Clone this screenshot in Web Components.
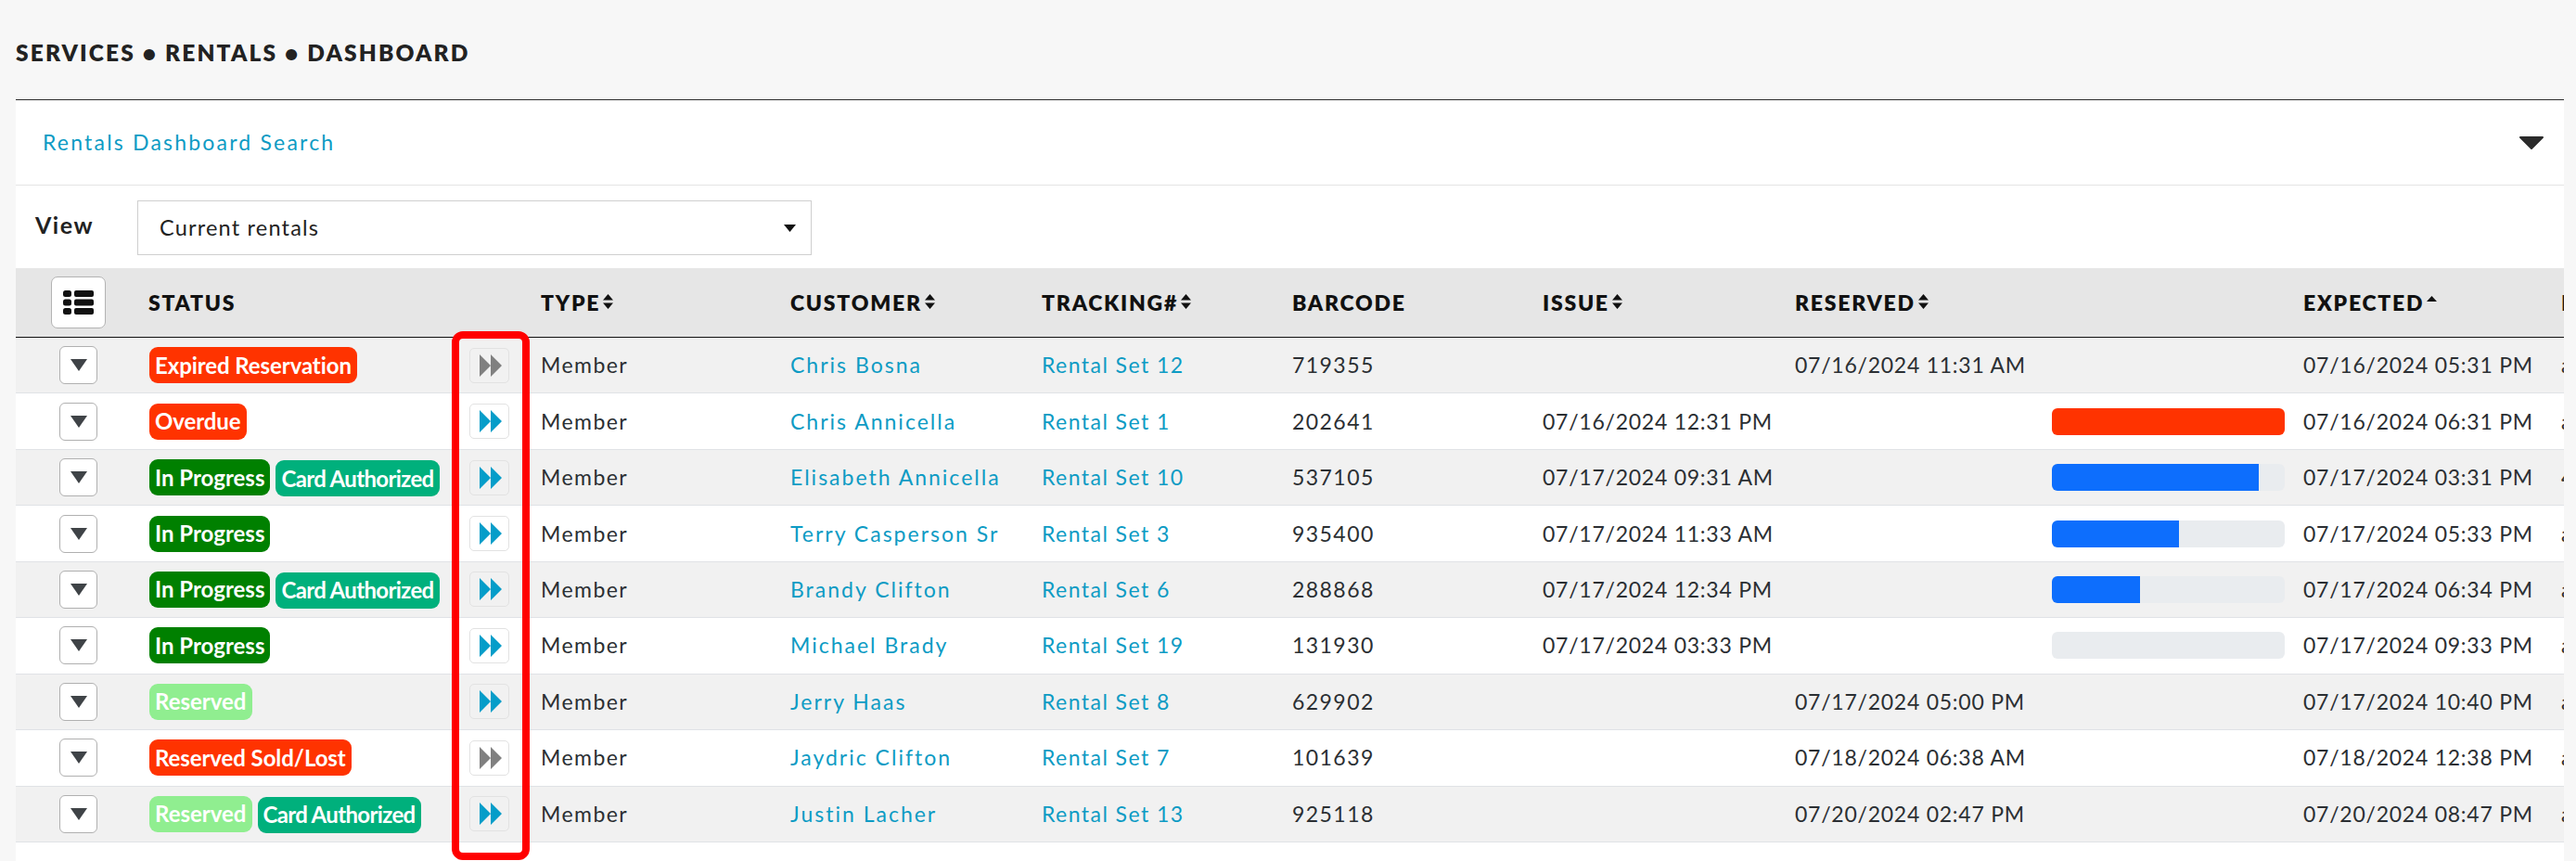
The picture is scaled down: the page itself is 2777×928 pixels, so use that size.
<!DOCTYPE html>
<html lang="en"><head><meta charset="utf-8"><title>Rentals Dashboard</title>
<style>
html,body{margin:0;padding:0;background:#f7f7f7;height:100%;overflow:hidden}
body{font-family:Lato,"Open Sans",sans-serif;color:#2b2f33}
</style></head><body>
<rentals-page></rentals-page>
<script>
const COLS='143px 346px 77px 269px 271px 270px 270px 272px 277px 271px 278px 1fr';
const ICON_DBL=c=>`<svg width="24" height="24" viewBox="0 0 24 24" aria-hidden="true"><path fill="${c}" d="M0 0L12 12L0 24ZM12 0L24 12L12 24Z"/></svg>`;
class SortIcon extends HTMLElement{
  connectedCallback(){
    const up=this.getAttribute('dir')==='up';
    this.attachShadow({mode:'open'}).innerHTML=`<style>:host{display:inline-block;margin-left:3px;vertical-align:${up?'10px':'2px'};line-height:0}</style>
    <svg width="11" height="${up?6:16}" viewBox="0 0 11 ${up?6:16}" aria-hidden="true"><path fill="#111" d="${up?'M5.5 0L11 6H0Z':'M5.5 0L11 6.5H0ZM0 9.5H11L5.5 16Z'}"/></svg>`;
  }
}
customElements.define('sort-icon',SortIcon);

class StatusBadge extends HTMLElement{
  constructor(){super();
    this.attachShadow({mode:'open'}).innerHTML=`<style>
    :host{display:inline-flex;align-items:center;height:39px;box-sizing:border-box;padding:0 6px;border-radius:9px;
      font:700 24px/1 Lato,sans-serif;color:#fff;white-space:nowrap;background:var(--bg)}
    :host([kind=danger]){--bg:#ff3300;letter-spacing:-.08px}
    :host([kind=progress]){--bg:#008000}
    :host([kind=reserved]){--bg:#90ee90}
    :host([kind=card]){--bg:#00b07c;margin-left:6px;position:relative;top:1px;letter-spacing:-.65px}
    </style><slot></slot>`;
  }
}
customElements.define('status-badge',StatusBadge);

class ProgressBar extends HTMLElement{
  connectedCallback(){
    const v=this.getAttribute('value')||0,c=this.getAttribute('color')||'#0d6efd';
    this.attachShadow({mode:'open'}).innerHTML=`<style>
    :host{display:block;width:251px;height:29px;border-radius:6px;background:#e9ecef;overflow:hidden}
    div{height:100%;background:${c}}
    </style><div style="width:${v}%"></div>`;
  }
}
customElements.define('progress-bar',ProgressBar);

class RentalRow extends HTMLElement{
  connectedCallback(){
    const d=JSON.parse(this.getAttribute('data-row'));
    const badges=d.b.map(([k,t])=>`<status-badge kind="${k}">${t}</status-badge>`).join('');
    this.attachShadow({mode:'open'}).innerHTML=`<style>
    :host{display:grid;grid-template-columns:${COLS};align-items:center;height:60.44px;box-sizing:border-box;
      border-bottom:1.5px solid #e0e2e6;font:400 23px/1 Lato,sans-serif;letter-spacing:1.45px;color:#2b2f33;background:#fff;white-space:nowrap}
    :host(:nth-child(odd)){background:#f1f1f1}
    .chev{justify-self:start;margin-left:47px;width:41px;height:41px;box-sizing:border-box;border:1px solid #b0b0b0;border-radius:6px;background:#fff;
      display:flex;align-items:center;justify-content:center}
    .badges{display:flex;letter-spacing:0;align-items:center;padding-left:1px}
    .go{width:43px;height:38px;box-sizing:border-box;border:1px solid #e2e2e2;border-radius:5px;display:flex;align-items:center;justify-content:center;padding-left:3px;background:transparent}
    a{color:#0d9bc4;text-decoration:none}
    .name{letter-spacing:2px}
    .date{letter-spacing:.75px}
    .bar{justify-self:start}
    </style>
    <div class="chev"><svg width="18" height="13" viewBox="0 0 18 13" aria-hidden="true"><path fill="#3f4347" d="M0 0H18L9 13Z"/></svg></div>
    <div class="badges">${badges}</div>
    <div class="go">${ICON_DBL(d.g?'#808080':'#059dc9')}</div>
    <div>Member</div><div class="name"><a>${d.c}</a></div><div><a>${d.t}</a></div><div>${d.n}</div>
    <div class="date">${d.i||''}</div><div class="date">${d.r||''}</div>
    <div class="bar">${d.p!=null?`<progress-bar value="${d.p}" ${d.p==100?'color="#ff3300"':''}></progress-bar>`:''}</div>
    <div class="date">${d.e}</div><div>${d.x}</div>`;
  }
}
customElements.define('rental-row',RentalRow);

class HeaderRow extends HTMLElement{
  constructor(){super();
    this.attachShadow({mode:'open'}).innerHTML=`<style>
    :host{display:grid;grid-template-columns:${COLS};align-items:center;height:75px;box-sizing:border-box;background:#e6e6e6;border-bottom:1.5px solid #111;
      font:800 23px/1 Lato,sans-serif;letter-spacing:1.75px;color:#111;white-space:nowrap}
    .menu{justify-self:start;margin-left:38px;width:59px;height:56px;box-sizing:border-box;background:#fff;border:1px solid #b3b3b3;border-radius:7px;display:flex;align-items:center;justify-content:center}
    .s{grid-column:span 2}
    </style>
    <div class="menu"><svg width="33" height="26" viewBox="0 0 33 26" aria-hidden="true"><g fill="#111"><rect width="9" height="7" rx="2.5"/><rect y="9.5" width="9" height="7" rx="2.5"/><rect y="19" width="9" height="7" rx="2.5"/><rect x="12" width="21" height="7" rx="2"/><rect x="12" y="9.5" width="21" height="7" rx="2"/><rect x="12" y="19" width="21" height="7" rx="2"/></g></svg></div>
    <div class="s">STATUS</div>
    <div>TYPE<sort-icon></sort-icon></div><div>CUSTOMER<sort-icon></sort-icon></div><div>TRACKING#<sort-icon></sort-icon></div>
    <div>BARCODE</div><div>ISSUE<sort-icon></sort-icon></div><div>RESERVED<sort-icon></sort-icon></div><div></div>
    <div>EXPECTED<sort-icon dir="up"></sort-icon></div><div>RETURNED</div>`;
  }
}
customElements.define('header-row',HeaderRow);

class ViewSelect extends HTMLElement{
  constructor(){super();
    this.attachShadow({mode:'open'}).innerHTML=`<style>
    :host{display:flex;align-items:center;justify-content:space-between;width:727px;height:59px;box-sizing:border-box;border:1.5px solid #cfcfcf;background:#fff;
      padding:0 16px 0 23px;font:400 23.5px/1 Lato,sans-serif;letter-spacing:1.2px;color:#222}
    </style><span><slot></slot></span><svg width="13" height="8" viewBox="0 0 13 8" aria-hidden="true"><path fill="#111" d="M0 0H13L6.5 8Z"/></svg>`;
  }
}
customElements.define('view-select',ViewSelect);

const R=(b,g,c,t,n,i,r,p,e,x)=>({b,g,c,t,n,i,r,p,e,x});
const D=[['danger','Expired Reservation']],O=[['danger','Overdue']],P=[['progress','In Progress']],C=['card','Card Authorized'],V=[['reserved','Reserved']],S=[['danger','Reserved Sold/Lost']];
const ROWS=[
R(D,1,'Chris Bosna','Rental Set 12','719355','','07/16/2024 11:31 AM',null,'07/16/2024 05:31 PM','a'),
R(O,0,'Chris Annicella','Rental Set 1','202641','07/16/2024 12:31 PM','',100,'07/16/2024 06:31 PM','a'),
R([...P,C],0,'Elisabeth Annicella','Rental Set 10','537105','07/17/2024 09:31 AM','',89,'07/17/2024 03:31 PM','4'),
R(P,0,'Terry Casperson Sr','Rental Set 3','935400','07/17/2024 11:33 AM','',54.6,'07/17/2024 05:33 PM','a'),
R([...P,C],0,'Brandy Clifton','Rental Set 6','288868','07/17/2024 12:34 PM','',38,'07/17/2024 06:34 PM','a'),
R(P,0,'Michael Brady','Rental Set 19','131930','07/17/2024 03:33 PM','',0,'07/17/2024 09:33 PM','a'),
R(V,0,'Jerry Haas','Rental Set 8','629902','','07/17/2024 05:00 PM',null,'07/17/2024 10:40 PM','a'),
R(S,1,'Jaydric Clifton','Rental Set 7','101639','','07/18/2024 06:38 AM',null,'07/18/2024 12:38 PM','a'),
R([...V,C],0,'Justin Lacher','Rental Set 13','925118','','07/20/2024 02:47 PM',null,'07/20/2024 08:47 PM','a'),
];

class RentalsPage extends HTMLElement{
  constructor(){super();
    const rows=ROWS.map(r=>`<rental-row data-row='${JSON.stringify(r).replace(/'/g,"&#39;")}'></rental-row>`).join('');
    this.attachShadow({mode:'open'}).innerHTML=`<style>
    :host{display:block;position:relative;height:928px;overflow:hidden;background:#f7f7f7;padding-left:17px;padding-right:13px;box-sizing:border-box}
    h1{margin:0;height:107px;box-sizing:border-box;padding-top:45px;font:800 24.5px/24px Lato,sans-serif;letter-spacing:2.15px;color:#222}
    .card{background:#fff;border-top:1.5px solid #2b2b2b;height:821px;overflow:hidden;position:relative;display:flex;flex-direction:column}
    .search{height:92px;flex:none;box-sizing:border-box;border-bottom:1.5px solid #e4e4e4;display:flex;align-items:center;justify-content:space-between;padding:0 22px 0 29px;
      font:400 23px/1 Lato,sans-serif;letter-spacing:2.2px;color:#0d9bc4}
    .view{height:89px;flex:none;display:flex;gap:47px;padding:16px 0 0 21px;box-sizing:border-box;font:700 25px/1 Lato,sans-serif;letter-spacing:1.5px;color:#222}
    .view b{font-weight:700;padding-top:14px}
    .flag{position:absolute;left:487px;top:357px;width:84px;height:570px;box-sizing:border-box;border:8.5px solid #ff0000;border-radius:12px;pointer-events:none}
    </style>
    <h1>SERVICES • RENTALS • DASHBOARD</h1>
    <section class="card">
      <div class="search"><span>Rentals Dashboard Search</span><svg width="26" height="14" viewBox="0 0 26 14" aria-hidden="true"><path fill="#2b2b2b" stroke="#2b2b2b" stroke-width="2" stroke-linejoin="round" d="M1 1H25L13 13Z"/></svg></div>
      <div class="view"><b>View</b><view-select>Current rentals</view-select></div>
      <div><header-row></header-row><div>${rows}</div></div>
    </section>
    <div class="flag"></div>`;
  }
}
customElements.define('rentals-page',RentalsPage);
</script>
</body></html>
